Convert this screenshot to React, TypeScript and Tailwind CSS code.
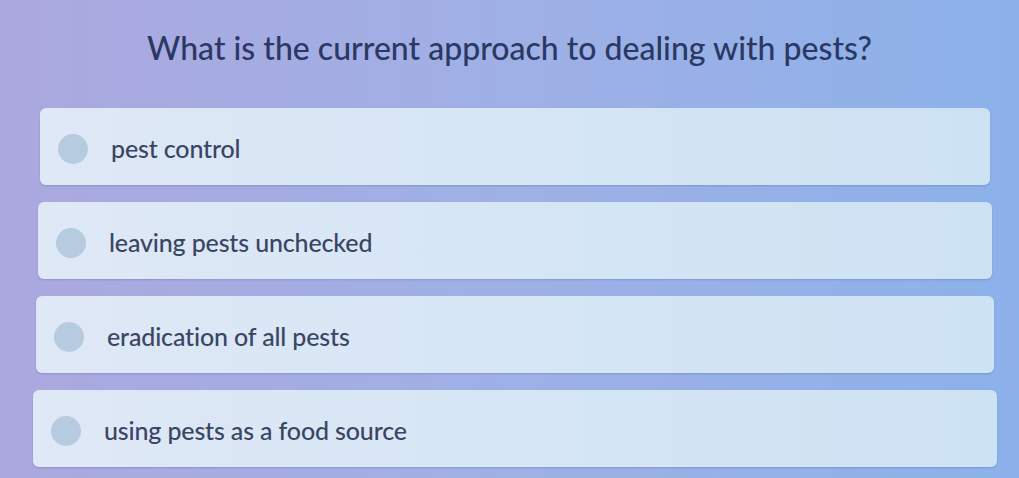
import React from "react";

const options = [
  { label: "pest control", cls: "ml-[40px] mr-[29px]" },
  { label: "leaving pests unchecked", cls: "ml-[38px] mr-[27px]" },
  { label: "eradication of all pests", cls: "ml-[36px] mr-[25px]" },
  { label: "using pests as a food source", cls: "ml-[33px] mr-[22px]" },
];

export default function App() {
  return (
    <div
      className="w-[1019px] h-[478px] overflow-hidden bg-gradient-to-r from-[#aba8df] via-[#9fb0e6] to-[#8cb1ea] flex flex-col"
      style={{ fontFamily: "Lato, 'Open Sans', sans-serif" }}
    >
      <h1 className="pt-[29px] h-[108px] text-center text-[32px] leading-[38px] text-[#2a3863] font-medium">
        What is the current approach to dealing with pests?
      </h1>
      <div className="flex flex-col gap-[17px]">
        {options.map((o) => (
          <div
            key={o.label}
            className={`${o.cls} h-[77px] rounded-[6px] bg-gradient-to-r from-[#dfe8f6] via-[#d6e6f5] to-[#cde2f3] flex items-center pl-[18px] pt-[4px] shadow-[0_1px_2px_rgba(60,80,140,0.25)]`}
          >
            <div className="w-[30px] h-[30px] rounded-full bg-[#b7cbe0] shrink-0" />
            <span className="ml-[23px] text-[25px] leading-none text-[#3a4564] font-medium tracking-[-0.15px]">
              {o.label}
            </span>
          </div>
        ))}
      </div>
    </div>
  );
}
